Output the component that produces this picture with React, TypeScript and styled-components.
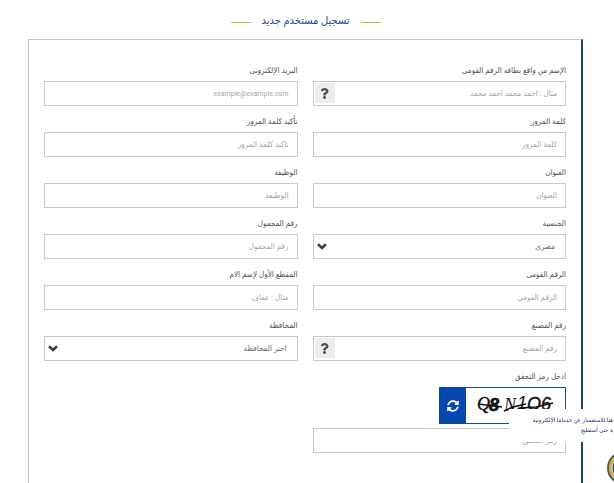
import React, { useId } from "react";
import styled, { createGlobalStyle } from "styled-components";
import { FaQuestion, FaSyncAlt } from "react-icons/fa";

const GlobalStyle = createGlobalStyle`
  *, *::before, *::after { box-sizing: border-box; }
  body {
    margin: 0;
    background: #fff;
    color: #4d4f55;
    font-family: Roboto, "DejaVu Sans Condensed", "DejaVu Sans", sans-serif;
    font-size: 8px;
    overflow: hidden;
  }
  input, select, button { font: inherit; }
`;

const Page = styled.main`
  display: flex;
  flex-direction: column;
  min-height: 100vh;
  padding: 12px 31px 0 28px;
`;

const Title = styled.h1`
  display: flex;
  align-items: center;
  justify-content: center;
  gap: 11px;
  height: 18px;
  margin: 0 0 9px;
  color: #1c4a86;
  font-size: 11px;
  font-weight: 400;
  line-height: 18px;
  white-space: nowrap;
`;

const Dash = styled.span`
  width: 20px;
  height: 1px;
  margin-top: 2px;
  background: #cbb935;
`;

const Panel = styled.form`
  flex: 1;
  display: grid;
  grid-template-columns: 1fr 1fr;
  align-content: start;
  gap: 10px 15px;
  padding: 25px 15px 30px;
  border: 1px solid #c4c6c8;
  border-right: 2px solid #1c4463;
  border-bottom: 0;
`;

const Field = styled.div`
  display: flex;
  flex-direction: column;
  gap: 4px;
  min-width: 0;
`;

const Label = styled.label`
  height: 12px;
  line-height: 12px;
  white-space: nowrap;
`;

const Box = styled.div`
  display: flex;
  align-items: center;
  height: 25px;
  border: 1px solid #c9cacc;
  background: #fff;
`;

const Input = styled.input`
  flex: 1;
  min-width: 0;
  height: 100%;
  padding: 0 8px;
  border: 0;
  outline: 0;
  background: transparent;
  text-align: right;

  &[type="email"] { font-size: 7px; }
  &::placeholder { color: #a4a5a8; opacity: 1; }
`;

const HelpButton = styled.button`
  display: grid;
  place-items: center;
  align-self: flex-start;
  width: 20px;
  height: 20px;
  margin: 1px 0 0 1px;
  padding: 0;
  border: 0;
  background: #ededed;
  color: #4d4f55;
  font-size: 11px;
`;

const SelectBox = styled(Box)`
  display: grid;

  > * { grid-area: 1 / 1; }
`;

const Select = styled.select`
  width: 100%;
  height: 100%;
  padding: 0 10px;
  border: 0;
  background: transparent;
  color: #66686c;
  appearance: none;
`;

const Arrow = styled.svg`
  justify-self: end;
  width: 10px;
  height: 7px;
  margin-left: 3px;
  fill: none;
  stroke: #3d3f43;
  stroke-width: 2.6;
  pointer-events: none;
`;

const Captcha = styled.div`
  display: flex;
  align-self: flex-start;
  width: 127px;
  height: 37px;
  border: 1px solid #1c4a76;
`;

const CaptchaImage = styled.svg`
  flex: 1;
  min-width: 0;
  height: 100%;
`;

const Refresh = styled.button`
  display: grid;
  place-items: center;
  width: 26px;
  padding: 0;
  border: 0;
  background: #0746ad;
  color: #fff;
  font-size: 12px;
`;

const Chat = styled.aside`
  position: fixed;
  right: 0;
  bottom: 41px;
  width: 105px;
  height: 33px;
  padding: 6px 1px 0 0;
  background: #fff;
  color: #29306d;
  font-size: 6px;
  line-height: 10px;
  white-space: nowrap;
`;

const ChatLine = styled.p`
  margin: 0;
`;

const Emblem = styled.svg`
  position: fixed;
  left: calc(100% - 7px);
  bottom: -2px;
  width: 34px;
  height: 34px;
`;

type FieldProps = { label: string; hint: string; help?: boolean; type?: string };

function TextField({ label, hint, help, type = "text" }: FieldProps) {
  const id = useId();
  return (
    <Field>
      <Label htmlFor={id}>{label}</Label>
      <Box>
        <Input id={id} type={type} placeholder={hint} />
        {help && <HelpButton type="button" aria-label="مساعدة"><FaQuestion /></HelpButton>}
      </Box>
    </Field>
  );
}

function SelectField({ label, value }: { label: string; value: string }) {
  const id = useId();
  return (
    <Field>
      <Label htmlFor={id}>{label}</Label>
      <SelectBox>
        <Select id={id}><option>{value}</option></Select>
        <Arrow viewBox="0 0 10 7" aria-hidden="true"><path d="M1 1.2L5 5L9 1.2" /></Arrow>
      </SelectBox>
    </Field>
  );
}

export default function App() {
  return (
    <>
      <GlobalStyle />
      <Page dir="rtl" lang="ar">
        <Title><Dash />تسجيل مستخدم جديد<Dash /></Title>
        <Panel>
          <TextField label="الإسم من واقع بطاقة الرقم القومى" hint="مثال : احمد محمد احمد محمد" help />
          <TextField label="البريد الإلكترونى" hint="example@example.com" type="email" />
          <TextField label="كلمة المرور" hint="كلمة المرور" type="password" />
          <TextField label="تأكيد كلمة المرور" hint="تأكيد كلمة المرور" type="password" />
          <TextField label="العنوان" hint="العنوان" />
          <TextField label="الوظيفة" hint="الوظيفة" />
          <SelectField label="الجنسية" value="مصرى" />
          <TextField label="رقم المحمول" hint="رقم المحمول" />
          <TextField label="الرقم القومى" hint="الرقم القومي" />
          <TextField label="المقطع الأول لإسم الام" hint="مثال : عفاف" />
          <TextField label="رقم المصنع" hint="رقم المصنع" help />
          <SelectField label="المحافظة" value="اختر المحافظة" />
          <Field>
            <Label htmlFor="code">ادخل رمز التحقق</Label>
            <Captcha>
              <CaptchaImage viewBox="0 0 99 35" direction="ltr" aria-label="Q8N1O6">
                <g fill="#111" fontSize="18">
                  <text x="11" y="22" fontFamily="Liberation Serif" fontStyle="italic" stroke="#111" strokeWidth="0.4">Q</text>
                  <text x="23" y="23" fontFamily="Liberation Sans" fontWeight="700" fontStyle="italic" stroke="#111" strokeWidth="0.6">8</text>
                  <text x="38" y="23" fontFamily="Liberation Serif" fontStyle="italic" fontSize="18">N</text>
                  <text x="51" y="21" fontFamily="Liberation Sans" fontStyle="italic">1</text>
                  <text x="61" y="22" fontFamily="Liberation Sans" fontStyle="italic" stroke="#111" strokeWidth="0.4">O</text>
                  <text x="75" y="22" fontFamily="Liberation Sans" fontStyle="italic" stroke="#111" strokeWidth="0.4">6</text>
                </g>
                <path d="M12 16L36 19M38 23L47 19L60 16M54 20L70 19L87 15" stroke="#111" strokeWidth="1.6" fill="none" />
              </CaptchaImage>
              <Refresh type="button" aria-label="تحديث الرمز"><FaSyncAlt /></Refresh>
            </Captcha>
            <Box><Input id="code" placeholder="رمز التحقق" /></Box>
          </Field>
        </Panel>
        <Chat>
          <ChatLine>هنا للاستفسار عن خدماتنا الإلكترونية</ChatLine>
          <ChatLine>ة حتى أستطيع</ChatLine>
        </Chat>
        <Emblem viewBox="0 0 34 34" aria-hidden="true">
          <circle cx="17" cy="17" r="16" fill="#d5b64b" stroke="#555c68" strokeWidth="2" />
          <circle cx="17" cy="17" r="12" fill="#244a9b" stroke="#e9d984" strokeWidth="1" />
        </Emblem>
      </Page>
    </>
  );
}
